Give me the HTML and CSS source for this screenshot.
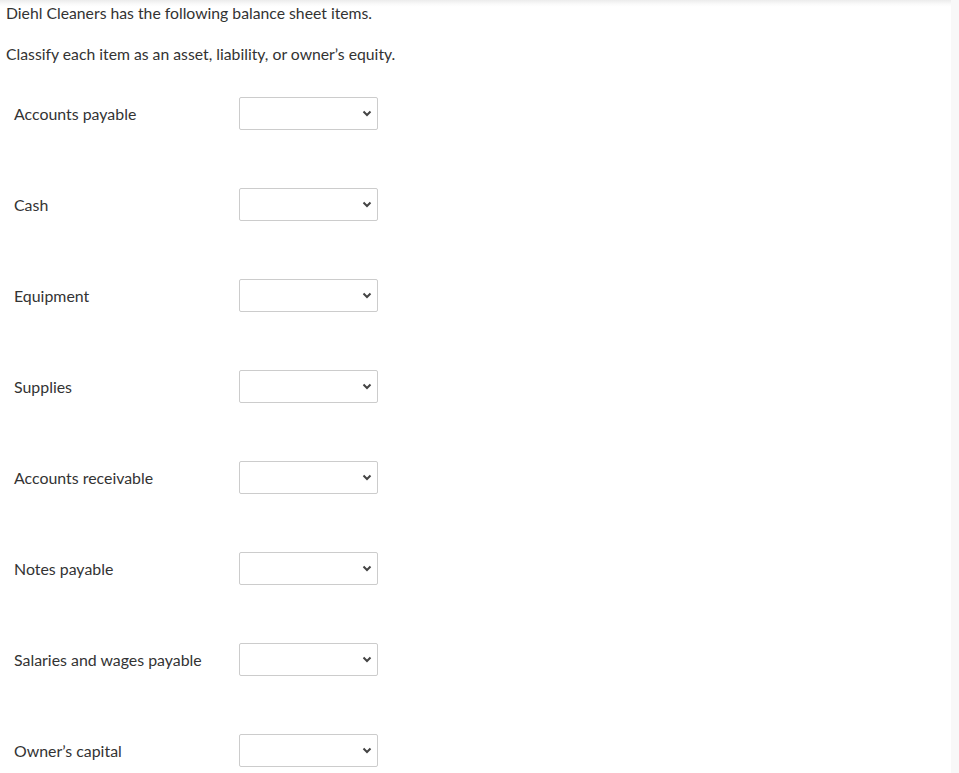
FILE: index.html
```html
<!DOCTYPE html>
<html>
<head>
<meta charset="utf-8">
<link rel="stylesheet" href="styles.css">
</head>
<body>
<div class="page">
  <main class="content">
    <p class="intro">Diehl Cleaners has the following balance sheet items.</p>
    <p class="intro second">Classify each item as an asset, liability, or owner’s equity.</p>
    <div class="rows">
      <div class="row"><span class="label">Accounts payable</span><div class="select"><svg class="chev" width="10" height="7" viewBox="0 0 10 7"><path d="M1.5 1.5 L5 5 L8.5 1.5" fill="none" stroke="#444" stroke-width="2"/></svg></div></div>
      <div class="row"><span class="label">Cash</span><div class="select"><svg class="chev" width="10" height="7" viewBox="0 0 10 7"><path d="M1.5 1.5 L5 5 L8.5 1.5" fill="none" stroke="#444" stroke-width="2"/></svg></div></div>
      <div class="row"><span class="label">Equipment</span><div class="select"><svg class="chev" width="10" height="7" viewBox="0 0 10 7"><path d="M1.5 1.5 L5 5 L8.5 1.5" fill="none" stroke="#444" stroke-width="2"/></svg></div></div>
      <div class="row"><span class="label">Supplies</span><div class="select"><svg class="chev" width="10" height="7" viewBox="0 0 10 7"><path d="M1.5 1.5 L5 5 L8.5 1.5" fill="none" stroke="#444" stroke-width="2"/></svg></div></div>
      <div class="row"><span class="label">Accounts receivable</span><div class="select"><svg class="chev" width="10" height="7" viewBox="0 0 10 7"><path d="M1.5 1.5 L5 5 L8.5 1.5" fill="none" stroke="#444" stroke-width="2"/></svg></div></div>
      <div class="row"><span class="label">Notes payable</span><div class="select"><svg class="chev" width="10" height="7" viewBox="0 0 10 7"><path d="M1.5 1.5 L5 5 L8.5 1.5" fill="none" stroke="#444" stroke-width="2"/></svg></div></div>
      <div class="row"><span class="label">Salaries and wages payable</span><div class="select"><svg class="chev" width="10" height="7" viewBox="0 0 10 7"><path d="M1.5 1.5 L5 5 L8.5 1.5" fill="none" stroke="#444" stroke-width="2"/></svg></div></div>
      <div class="row"><span class="label">Owner’s capital</span><div class="select"><svg class="chev" width="10" height="7" viewBox="0 0 10 7"><path d="M1.5 1.5 L5 5 L8.5 1.5" fill="none" stroke="#444" stroke-width="2"/></svg></div></div>
    </div>
  </main>
  <aside class="strip"></aside>
</div>
</body>
</html>
```
FILE: styles.css
```css
html, body {
  margin: 0;
  padding: 0;
  background: #fff;
}
body {
  font-family: Lato, "Open Sans", sans-serif;
  font-size: 16px;
  color: #333;
}
.page {
  display: flex;
  min-height: 773px;
}
.content {
  flex: 1;
  padding: 3px 0 0 6px;
  background: linear-gradient(to bottom, #ececec 0, #fafafa 4px, #fff 7px);
}
.strip {
  width: 8px;
  background: #f8f8f8;
}
.intro {
  margin: 0;
  font-size: 15.75px;
  line-height: 20px;
}
.intro.second {
  margin-top: 21px;
}
.rows {
  display: flex;
  flex-direction: column;
  gap: 58px;
  padding: 33px 0 0 8px;
}
.row {
  display: flex;
  align-items: center;
  height: 33px;
}
.label {
  width: 225px;
  font-size: 15.9px;
}
.select {
  width: 132px;
  height: 31px;
  border: 1px solid #ccc;
  border-radius: 2px;
  background: #fff;
  display: flex;
  align-items: center;
  justify-content: flex-end;
  padding-right: 5px;
}
.chev {
  display: block;
}
```
